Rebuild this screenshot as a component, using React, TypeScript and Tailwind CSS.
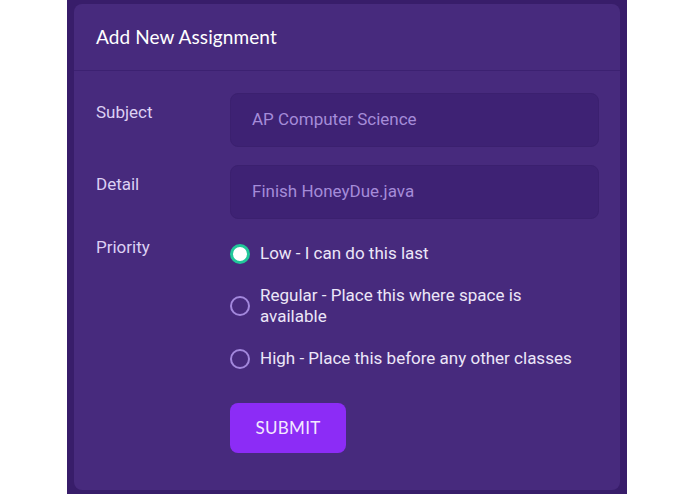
import React from 'react';

const options = [
  { label: 'Low - I can do this last', checked: true },
  { label: 'Regular - Place this where space is available', checked: false },
  { label: 'High - Place this before any other classes', checked: false },
];

const Radio: React.FC<{ checked: boolean }> = ({ checked }) =>
  checked ? (
    <span className="w-[20px] h-[20px] shrink-0 rounded-full border-[3px] border-[#22c79a] bg-white" />
  ) : (
    <span className="w-[20px] h-[20px] shrink-0 rounded-full border-2 border-[#a388dd]" />
  );

const App: React.FC = () => {
  return (
    <div className="w-[695px] h-[494px] bg-white flex" style={{ fontFamily: 'Roboto, sans-serif' }}>
      <div className="ml-[67px] w-[560px] h-full bg-[#381d6a] px-[7px] pt-[4px] pb-[4px]">
        <div className="h-full rounded-lg bg-[#472a7d] flex flex-col">
          <div className="h-[67px] px-[22px] flex items-center border-b border-[#3c2171]">
            <h1 className="text-[19px] text-white tracking-[0.1px]" style={{ fontFamily: 'Lato, sans-serif' }}>
              Add New Assignment
            </h1>
          </div>

          <div className="pl-[22px] pr-[21px] pt-[22px] flex flex-col">
            <div className="flex">
              <label className="w-[134px] mt-[7px] text-[17px] leading-6 text-[#dcd0f3]">Subject</label>
              <div className="flex-1 h-[54px] rounded-lg bg-[#3e2274] border border-[#3b206f] px-[21px] flex items-center text-[17px] text-[#a58cd9]">
                AP Computer Science
              </div>
            </div>

            <div className="flex mt-[18px]">
              <label className="w-[134px] mt-[7px] text-[17px] leading-6 text-[#dcd0f3]">Detail</label>
              <div className="flex-1 h-[54px] rounded-lg bg-[#3e2274] border border-[#3b206f] px-[21px] flex items-center text-[17px] text-[#a58cd9]">
                Finish HoneyDue.java
              </div>
            </div>

            <div className="flex mt-[16px]">
              <label className="w-[134px] text-[17px] leading-6 text-[#dcd0f3]">Priority</label>
              <div className="flex-1 flex flex-col pt-[8px]">
                <div className="flex flex-col gap-[21px]">
                  {options.map((o) => (
                    <div key={o.label} className="flex items-center gap-[10px]">
                      <Radio checked={o.checked} />
                      <span className="w-[320px] text-[17px] leading-[21px] text-[#ece6f8]">{o.label}</span>
                    </div>
                  ))}
                </div>
                <button
                  className="mt-[34px] w-[116px] h-[50px] rounded-lg bg-[#8c2cf6] text-[17px] text-[#f3e8ff] tracking-[0.3px]"
                  style={{ fontFamily: 'Lato, sans-serif' }}
                >
                  SUBMIT
                </button>
              </div>
            </div>
          </div>
        </div>
      </div>
    </div>
  );
};

export default App;
